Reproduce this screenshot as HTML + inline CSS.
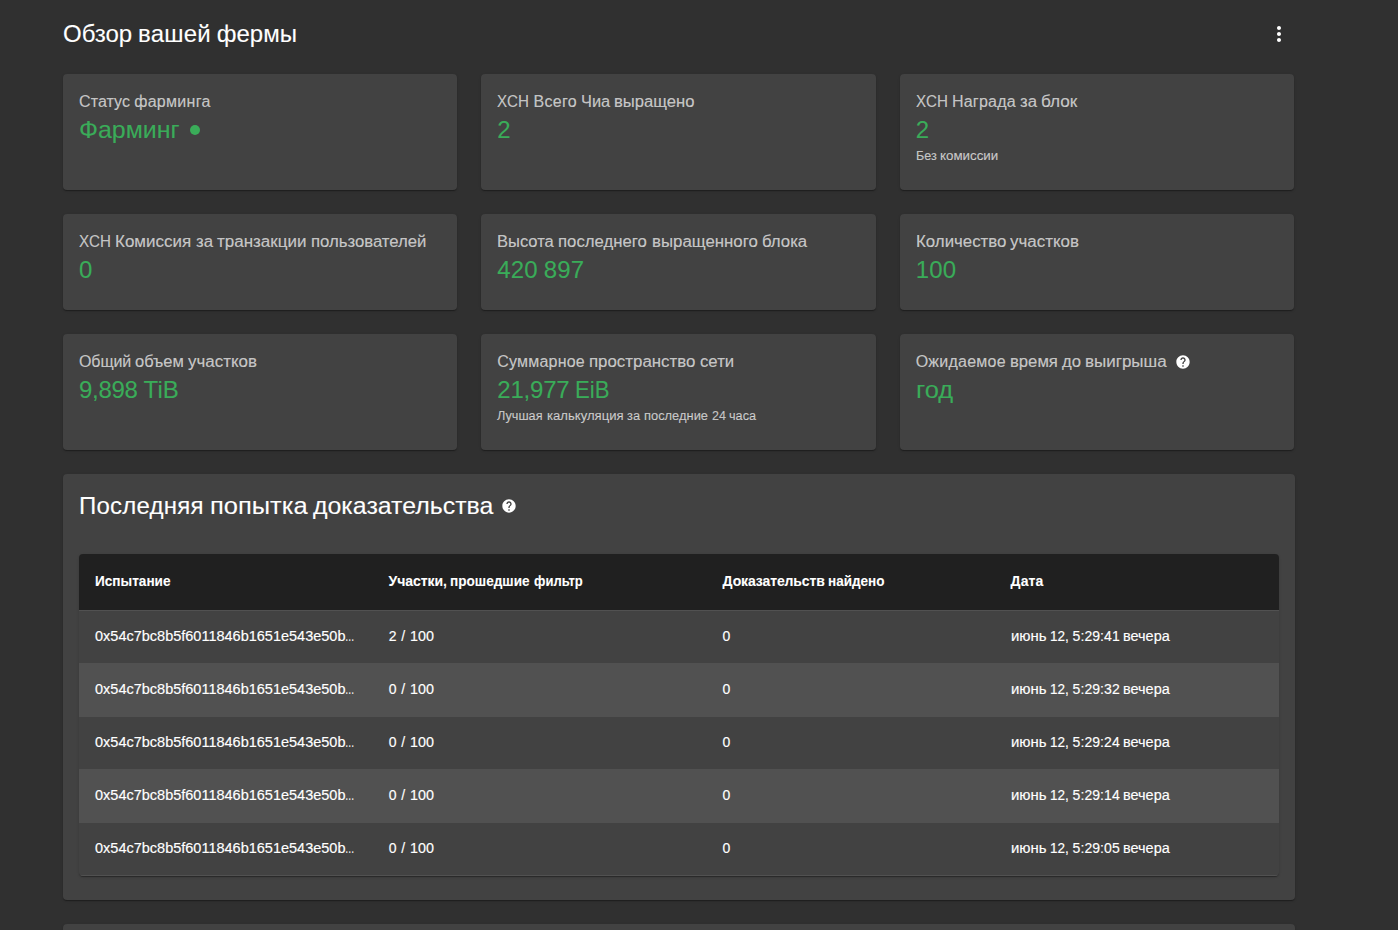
<!DOCTYPE html>
<html lang="ru">
<head>
<meta charset="utf-8">
<title>Chia</title>
<style>
*{box-sizing:border-box;}
html,body{margin:0;padding:0;}
body{width:1398px;height:930px;overflow:hidden;background:#303030;color:#fff;font-family:"Liberation Sans",sans-serif;font-size:16px;position:relative;}
.h5{font-size:24px;line-height:32px;font-weight:400;margin:0;white-space:nowrap;}
#title{position:absolute;left:63px;top:18px;}
#more{position:absolute;left:1267px;top:22px;width:24px;height:24px;}
.card{position:absolute;background:#424242;border-radius:4px;box-shadow:0 2px 1px -1px rgba(0,0,0,.2),0 1px 1px 0 rgba(0,0,0,.14),0 1px 3px 0 rgba(0,0,0,.12);padding:16px 16px 24px 16px;}
.c1{left:63px;width:394.33px;}
.c2{left:481.33px;width:394.33px;}
.c3{left:899.67px;width:394.33px;}
.r1{top:74px;height:116px;}
.r2{top:214px;height:96px;}
.r3{top:334px;height:116px;}
.ct{font-size:16px;line-height:24px;color:rgba(255,255,255,.7);white-space:nowrap;display:flex;align-items:center;}
.cv{font-size:24px;line-height:32px;color:#3aac59;white-space:nowrap;display:flex;align-items:center;}
.cc{font-size:12px;line-height:20px;color:rgba(255,255,255,.7);white-space:nowrap;}
.dot{position:absolute;left:126.6px;top:50.6px;width:10.8px;height:10.8px;border-radius:50%;background:#3aac59;}
.help{position:absolute;width:16px;height:16px;}
#h1{left:275.3px;top:19.85px;}
#h2{left:438.1px;top:24px;}
#panel{left:63px;top:474px;width:1232px;height:426px;}
#panel2{left:63px;top:924px;width:1232px;height:100px;}
#tbl{position:absolute;left:16px;top:80px;width:1200px;border-radius:4px;overflow:hidden;background:#424242;box-shadow:0 2px 1px -1px rgba(0,0,0,.2),0 1px 1px 0 rgba(0,0,0,.14),0 1px 3px 0 rgba(0,0,0,.12);}
.tr{display:flex;height:53px;border-bottom:1px solid #515151;font-size:14px;line-height:20px;}
.tr.hd{height:57px;background:#202020;font-weight:700;line-height:24px;}
.tr.odd{background:#515151;}
.tr>div{padding:15px 16.4px 17px 15.6px;white-space:nowrap;overflow:hidden;}
.k1{width:294px;}.k2{width:334px;}.k3{width:288px;}.k4{width:284px;}
.h5,.cv{-webkit-text-stroke:0.1px currentColor}.ct{-webkit-text-stroke:0.12px currentColor}.cc{-webkit-text-stroke:0.1px currentColor}.tr{-webkit-text-stroke:0.15px currentColor}.tr.hd{-webkit-text-stroke:0.08px currentColor}
</style>
</head>
<body>
<div id="title" class="h5"><span class="t"><span class="k" style="letter-spacing:-0.037px">Обзор</span><span class="k" style="letter-spacing:-0.719px"> </span><span class="k" style="letter-spacing:0.188px">вашей</span><span class="k" style="letter-spacing:-0.719px"> </span><span class="k" style="letter-spacing:-0.035px">фермы</span></span></div>
<svg id="more" viewBox="0 0 24 24"><path fill="#fff" d="M12 8c1.1 0 2-.9 2-2s-.9-2-2-2-2 .9-2 2 .9 2 2 2zm0 2c-1.1 0-2 .9-2 2s.9 2 2 2 2-.9 2-2-.9-2-2-2zm0 6c-1.1 0-2 .9-2 2s.9 2 2 2 2-.9 2-2-.9-2-2-2z"/></svg>

<div class="card c1 r1"><div class="ct"><span class="t"><span class="k" style="letter-spacing:0.086px">Статус</span><span class="k" style="letter-spacing:-0.328px"> </span><span class="k" style="letter-spacing:0.282px">фарминга</span></span></div><div class="cv"><span class="t"><span class="k" style="display:inline-block;transform:scaleX(1.0390);transform-origin:0 0;margin-right:3.781px">Фарминг</span></span></div><span class="dot"></span></div>
<div class="card c2 r1"><div class="ct"><span class="t"><span class="k" style="display:inline-block;transform:scaleX(0.9465);transform-origin:0 0;margin-right:-1.656px">XCH</span><span class="k" style="letter-spacing:-0.328px"> </span><span class="k" style="letter-spacing:0.266px">Всего</span><span class="k" style="letter-spacing:-0.328px"> </span><span class="k" style="display:inline-block;transform:scaleX(1.0243);transform-origin:0 0;margin-right:0.844px">Чиа</span><span class="k" style="letter-spacing:-0.328px"> </span><span class="k" style="display:inline-block;transform:scaleX(1.0396);transform-origin:0 0;margin-right:3.219px">выращено</span></span></div><div class="cv"><span class="t"><span class="k">2</span></span></div></div>
<div class="card c3 r1"><div class="ct"><span class="t"><span class="k" style="display:inline-block;transform:scaleX(0.9465);transform-origin:0 0;margin-right:-1.656px">XCH</span><span class="k" style="letter-spacing:-0.328px"> </span><span class="k" style="letter-spacing:0.230px">Награда</span><span class="k" style="letter-spacing:-0.328px"> </span><span class="k" style="display:inline-block;transform:scaleX(1.0466);transform-origin:0 0;margin-right:0.906px">за</span><span class="k" style="letter-spacing:-0.328px"> </span><span class="k" style="display:inline-block;transform:scaleX(1.0731);transform-origin:0 0;margin-right:2.625px">блок</span></span></div><div class="cv"><span class="t"><span class="k">2</span></span></div><div class="cc"><span class="t"><span class="k" style="display:inline-block;transform:scaleX(1.0524);transform-origin:0 0;margin-right:1.438px">Без</span><span class="k" style="letter-spacing:0.047px"> </span><span class="k" style="display:inline-block;transform:scaleX(1.1113);transform-origin:0 0;margin-right:6.234px">комиссии</span></span></div></div>

<div class="card c1 r2"><div class="ct"><span class="t"><span class="k" style="display:inline-block;transform:scaleX(0.9465);transform-origin:0 0;margin-right:-1.656px">XCH</span><span class="k" style="letter-spacing:-0.328px"> </span><span class="k" style="display:inline-block;transform:scaleX(1.0606);transform-origin:0 0;margin-right:4.500px">Комиссия</span><span class="k" style="letter-spacing:-0.328px"> </span><span class="k" style="display:inline-block;transform:scaleX(1.0466);transform-origin:0 0;margin-right:0.906px">за</span><span class="k" style="letter-spacing:-0.328px"> </span><span class="k" style="display:inline-block;transform:scaleX(1.0613);transform-origin:0 0;margin-right:5.312px">транзакции</span><span class="k" style="letter-spacing:-0.328px"> </span><span class="k" style="display:inline-block;transform:scaleX(1.0450);transform-origin:0 0;margin-right:5.125px">пользователей</span></span></div><div class="cv"><span class="t"><span class="k">0</span></span></div></div>
<div class="card c2 r2"><div class="ct"><span class="t"><span class="k" style="display:inline-block;transform:scaleX(1.0328);transform-origin:0 0;margin-right:1.953px">Высота</span><span class="k" style="letter-spacing:-0.328px"> </span><span class="k" style="display:inline-block;transform:scaleX(1.0468);transform-origin:0 0;margin-right:4.125px">последнего</span><span class="k" style="letter-spacing:-0.328px"> </span><span class="k" style="display:inline-block;transform:scaleX(1.0518);transform-origin:0 0;margin-right:5.359px">выращенного</span><span class="k" style="letter-spacing:-0.328px"> </span><span class="k" style="display:inline-block;transform:scaleX(1.0483);transform-origin:0 0;margin-right:2.234px">блока</span></span></div><div class="cv"><span class="t"><span class="k" style="letter-spacing:0.141px">420</span><span class="k" style="letter-spacing:-0.719px"> </span><span class="k" style="letter-spacing:0.211px">897</span></span></div></div>
<div class="card c3 r2"><div class="ct"><span class="t"><span class="k" style="display:inline-block;transform:scaleX(1.0526);transform-origin:0 0;margin-right:4.672px">Количество</span><span class="k" style="letter-spacing:-0.328px"> </span><span class="k" style="display:inline-block;transform:scaleX(1.0572);transform-origin:0 0;margin-right:3.875px">участков</span></span></div><div class="cv"><span class="t"><span class="k" style="letter-spacing:0.211px">100</span></span></div></div>

<div class="card c1 r3"><div class="ct"><span class="t"><span class="k" style="letter-spacing:-0.091px">Общий</span><span class="k" style="letter-spacing:-0.328px"> </span><span class="k" style="display:inline-block;transform:scaleX(1.0301);transform-origin:0 0;margin-right:1.578px">объем</span><span class="k" style="letter-spacing:-0.328px"> </span><span class="k" style="display:inline-block;transform:scaleX(1.0572);transform-origin:0 0;margin-right:3.875px">участков</span></span></div><div class="cv"><span class="t"><span class="k" style="letter-spacing:-0.275px">9,898</span><span class="k" style="letter-spacing:-0.750px"> </span><span class="k">TiB</span></span></div></div>
<div class="card c2 r3"><div class="ct"><span class="t"><span class="k" style="letter-spacing:0.198px">Суммарное</span><span class="k" style="letter-spacing:-0.328px"> </span><span class="k" style="display:inline-block;transform:scaleX(1.0531);transform-origin:0 0;margin-right:5.516px">пространство</span><span class="k" style="letter-spacing:-0.328px"> </span><span class="k" style="display:inline-block;transform:scaleX(1.0466);transform-origin:0 0;margin-right:1.672px">сети</span></span></div><div class="cv"><span class="t"><span class="k" style="letter-spacing:-0.206px">21,977</span><span class="k" style="letter-spacing:-0.719px"> </span><span class="k" style="display:inline-block;transform:scaleX(0.9218);transform-origin:0 0;margin-right:-2.922px">EiB</span></span></div><div class="cc"><span class="t"><span class="k" style="display:inline-block;transform:scaleX(1.0575);transform-origin:0 0;margin-right:2.875px">Лучшая</span><span class="k" style="letter-spacing:0.047px"> </span><span class="k" style="display:inline-block;transform:scaleX(1.0914);transform-origin:0 0;margin-right:6.812px">калькуляция</span><span class="k" style="letter-spacing:0.047px"> </span><span class="k" style="display:inline-block;transform:scaleX(1.0685);transform-origin:0 0;margin-right:1.234px">за</span><span class="k" style="letter-spacing:0.047px"> </span><span class="k" style="display:inline-block;transform:scaleX(1.0740);transform-origin:0 0;margin-right:4.812px">последние</span><span class="k" style="letter-spacing:0.047px"> </span><span class="k" style="display:inline-block;transform:scaleX(1.0402);transform-origin:0 0;margin-right:0.938px">24</span><span class="k" style="letter-spacing:0.047px"> </span><span class="k" style="display:inline-block;transform:scaleX(1.0570);transform-origin:0 0;margin-right:1.859px">часа</span></span></div></div>
<div class="card c3 r3"><div class="ct"><span class="t"><span class="k" style="letter-spacing:0.240px">Ожидаемое</span><span class="k" style="letter-spacing:-0.328px"> </span><span class="k" style="display:inline-block;transform:scaleX(1.0416);transform-origin:0 0;margin-right:2.062px">время</span><span class="k" style="letter-spacing:-0.328px"> </span><span class="k" style="display:inline-block;transform:scaleX(1.0389);transform-origin:0 0;margin-right:0.859px">до</span><span class="k" style="letter-spacing:-0.328px"> </span><span class="k" style="display:inline-block;transform:scaleX(1.0614);transform-origin:0 0;margin-right:4.875px">выигрыша</span></span></div><div class="cv"><span class="t"><span class="k" style="display:inline-block;transform:scaleX(1.0602);transform-origin:0 0;margin-right:2.109px">год</span></span></div><svg class="help" id="h1" viewBox="0 0 24 24"><path fill="#fff" d="M12 2C6.48 2 2 6.48 2 12s4.48 10 10 10 10-4.48 10-10S17.52 2 12 2zm1 17h-2v-2h2v2zm2.07-7.75l-.9.92C13.45 12.9 13 13.5 13 15h-2v-.5c0-1.1.45-2.1 1.17-2.83l1.24-1.26c.37-.36.59-.86.59-1.41 0-1.1-.9-2-2-2s-2 .9-2 2H8c0-2.21 1.79-4 4-4s4 1.79 4 4c0 .88-.36 1.68-.93 2.25z"/></svg></div>

<div class="card" id="panel">
  <div id="ptitle" class="h5"><span class="t"><span class="k" style="letter-spacing:0.219px">Последняя</span><span class="k" style="letter-spacing:-0.719px"> </span><span class="k" style="display:inline-block;transform:scaleX(1.0612);transform-origin:0 0;margin-right:5.625px">попытка</span><span class="k" style="letter-spacing:-0.719px"> </span><span class="k" style="display:inline-block;transform:scaleX(1.0373);transform-origin:0 0;margin-right:6.484px">доказательства</span></span></div>
  <svg class="help" id="h2" viewBox="0 0 24 24"><path fill="#fff" d="M12 2C6.48 2 2 6.48 2 12s4.48 10 10 10 10-4.48 10-10S17.52 2 12 2zm1 17h-2v-2h2v2zm2.07-7.75l-.9.92C13.45 12.9 13 13.5 13 15h-2v-.5c0-1.1.45-2.1 1.17-2.83l1.24-1.26c.37-.36.59-.86.59-1.41 0-1.1-.9-2-2-2s-2 .9-2 2H8c0-2.21 1.79-4 4-4s4 1.79 4 4c0 .88-.36 1.68-.93 2.25z"/></svg>
  <div id="tbl">
    <div class="tr hd"><div class="k1"><span class="t"><span class="k" style="display:inline-block;transform:scaleX(0.9713);transform-origin:0 0;margin-right:-2.078px">Испытание</span></span></div><div class="k2"><span class="t"><span class="k" style="letter-spacing:-0.066px">Участки,</span><span class="k" style="letter-spacing:-0.250px"> </span><span class="k" style="display:inline-block;transform:scaleX(0.9705);transform-origin:0 0;margin-right:-2.266px">прошедшие</span><span class="k" style="letter-spacing:-0.250px"> </span><span class="k" style="display:inline-block;transform:scaleX(0.9293);transform-origin:0 0;margin-right:-3.562px">фильтр</span></span></div><div class="k3"><span class="t"><span class="k" style="letter-spacing:-0.113px">Доказательств</span><span class="k" style="letter-spacing:-0.250px"> </span><span class="k" style="display:inline-block;transform:scaleX(0.9659);transform-origin:0 0;margin-right:-1.844px">найдено</span></span></div><div class="k4"><span class="t"><span class="k" style="letter-spacing:0.122px">Дата</span></span></div></div>
    <div class="tr"><div class="k1"><span class="t"><span class="k" style="display:inline-block;transform:scaleX(1.0357);transform-origin:0 0;margin-right:8.797px">0x54c7bc8b5f6011846b1651e543e50b</span><span class="k" style="display:inline-block;transform:scaleX(0.6690);transform-origin:0 0;margin-right:-4.484px">…</span></span></div><div class="k2"><span class="t"><span class="k" style="padding:0 0.117px">2</span><span class="k" style="letter-spacing:-0.266px"> </span><span class="k" style="padding:0 1.023px">/</span><span class="k" style="letter-spacing:-0.266px"> </span><span class="k" style="display:inline-block;transform:scaleX(1.0237);transform-origin:0 0;margin-right:0.703px">100</span></span></div><div class="k3"><span class="t"><span class="k">0</span></span></div><div class="k4"><span class="t"><span class="k" style="display:inline-block;transform:scaleX(1.0686);transform-origin:0 0;margin-right:2.438px">июнь</span><span class="k" style="letter-spacing:-0.266px"> </span><span class="k" style="display:inline-block;transform:scaleX(0.9658);transform-origin:0 0;margin-right:-0.516px">12,</span><span class="k" style="letter-spacing:-0.266px"> </span><span class="k" style="letter-spacing:0.065px">5:29:41</span><span class="k" style="letter-spacing:-0.266px"> </span><span class="k" style="display:inline-block;transform:scaleX(1.0319);transform-origin:0 0;margin-right:1.594px">вечера</span></span></div></div>
    <div class="tr odd"><div class="k1"><span class="t"><span class="k" style="display:inline-block;transform:scaleX(1.0357);transform-origin:0 0;margin-right:8.797px">0x54c7bc8b5f6011846b1651e543e50b</span><span class="k" style="display:inline-block;transform:scaleX(0.6690);transform-origin:0 0;margin-right:-4.484px">…</span></span></div><div class="k2"><span class="t"><span class="k" style="padding:0 0.117px">0</span><span class="k" style="letter-spacing:-0.266px"> </span><span class="k" style="padding:0 1.023px">/</span><span class="k" style="letter-spacing:-0.266px"> </span><span class="k" style="display:inline-block;transform:scaleX(1.0237);transform-origin:0 0;margin-right:0.703px">100</span></span></div><div class="k3"><span class="t"><span class="k">0</span></span></div><div class="k4"><span class="t"><span class="k" style="display:inline-block;transform:scaleX(1.0686);transform-origin:0 0;margin-right:2.438px">июнь</span><span class="k" style="letter-spacing:-0.266px"> </span><span class="k" style="display:inline-block;transform:scaleX(0.9658);transform-origin:0 0;margin-right:-0.516px">12,</span><span class="k" style="letter-spacing:-0.266px"> </span><span class="k" style="letter-spacing:0.065px">5:29:32</span><span class="k" style="letter-spacing:-0.266px"> </span><span class="k" style="display:inline-block;transform:scaleX(1.0319);transform-origin:0 0;margin-right:1.594px">вечера</span></span></div></div>
    <div class="tr"><div class="k1"><span class="t"><span class="k" style="display:inline-block;transform:scaleX(1.0357);transform-origin:0 0;margin-right:8.797px">0x54c7bc8b5f6011846b1651e543e50b</span><span class="k" style="display:inline-block;transform:scaleX(0.6690);transform-origin:0 0;margin-right:-4.484px">…</span></span></div><div class="k2"><span class="t"><span class="k" style="padding:0 0.117px">0</span><span class="k" style="letter-spacing:-0.266px"> </span><span class="k" style="padding:0 1.023px">/</span><span class="k" style="letter-spacing:-0.266px"> </span><span class="k" style="display:inline-block;transform:scaleX(1.0237);transform-origin:0 0;margin-right:0.703px">100</span></span></div><div class="k3"><span class="t"><span class="k">0</span></span></div><div class="k4"><span class="t"><span class="k" style="display:inline-block;transform:scaleX(1.0686);transform-origin:0 0;margin-right:2.438px">июнь</span><span class="k" style="letter-spacing:-0.266px"> </span><span class="k" style="display:inline-block;transform:scaleX(0.9658);transform-origin:0 0;margin-right:-0.516px">12,</span><span class="k" style="letter-spacing:-0.266px"> </span><span class="k" style="letter-spacing:0.065px">5:29:24</span><span class="k" style="letter-spacing:-0.266px"> </span><span class="k" style="display:inline-block;transform:scaleX(1.0319);transform-origin:0 0;margin-right:1.594px">вечера</span></span></div></div>
    <div class="tr odd"><div class="k1"><span class="t"><span class="k" style="display:inline-block;transform:scaleX(1.0357);transform-origin:0 0;margin-right:8.797px">0x54c7bc8b5f6011846b1651e543e50b</span><span class="k" style="display:inline-block;transform:scaleX(0.6690);transform-origin:0 0;margin-right:-4.484px">…</span></span></div><div class="k2"><span class="t"><span class="k" style="padding:0 0.117px">0</span><span class="k" style="letter-spacing:-0.266px"> </span><span class="k" style="padding:0 1.023px">/</span><span class="k" style="letter-spacing:-0.266px"> </span><span class="k" style="display:inline-block;transform:scaleX(1.0237);transform-origin:0 0;margin-right:0.703px">100</span></span></div><div class="k3"><span class="t"><span class="k">0</span></span></div><div class="k4"><span class="t"><span class="k" style="display:inline-block;transform:scaleX(1.0686);transform-origin:0 0;margin-right:2.438px">июнь</span><span class="k" style="letter-spacing:-0.266px"> </span><span class="k" style="display:inline-block;transform:scaleX(0.9658);transform-origin:0 0;margin-right:-0.516px">12,</span><span class="k" style="letter-spacing:-0.266px"> </span><span class="k" style="letter-spacing:0.065px">5:29:14</span><span class="k" style="letter-spacing:-0.266px"> </span><span class="k" style="display:inline-block;transform:scaleX(1.0319);transform-origin:0 0;margin-right:1.594px">вечера</span></span></div></div>
    <div class="tr"><div class="k1"><span class="t"><span class="k" style="display:inline-block;transform:scaleX(1.0357);transform-origin:0 0;margin-right:8.797px">0x54c7bc8b5f6011846b1651e543e50b</span><span class="k" style="display:inline-block;transform:scaleX(0.6690);transform-origin:0 0;margin-right:-4.484px">…</span></span></div><div class="k2"><span class="t"><span class="k" style="padding:0 0.117px">0</span><span class="k" style="letter-spacing:-0.266px"> </span><span class="k" style="padding:0 1.023px">/</span><span class="k" style="letter-spacing:-0.266px"> </span><span class="k" style="display:inline-block;transform:scaleX(1.0237);transform-origin:0 0;margin-right:0.703px">100</span></span></div><div class="k3"><span class="t"><span class="k">0</span></span></div><div class="k4"><span class="t"><span class="k" style="display:inline-block;transform:scaleX(1.0686);transform-origin:0 0;margin-right:2.438px">июнь</span><span class="k" style="letter-spacing:-0.266px"> </span><span class="k" style="display:inline-block;transform:scaleX(0.9658);transform-origin:0 0;margin-right:-0.516px">12,</span><span class="k" style="letter-spacing:-0.266px"> </span><span class="k" style="letter-spacing:0.065px">5:29:05</span><span class="k" style="letter-spacing:-0.266px"> </span><span class="k" style="display:inline-block;transform:scaleX(1.0319);transform-origin:0 0;margin-right:1.594px">вечера</span></span></div></div>
  </div>
</div>
<div class="card" id="panel2"></div>
</body>
</html>
